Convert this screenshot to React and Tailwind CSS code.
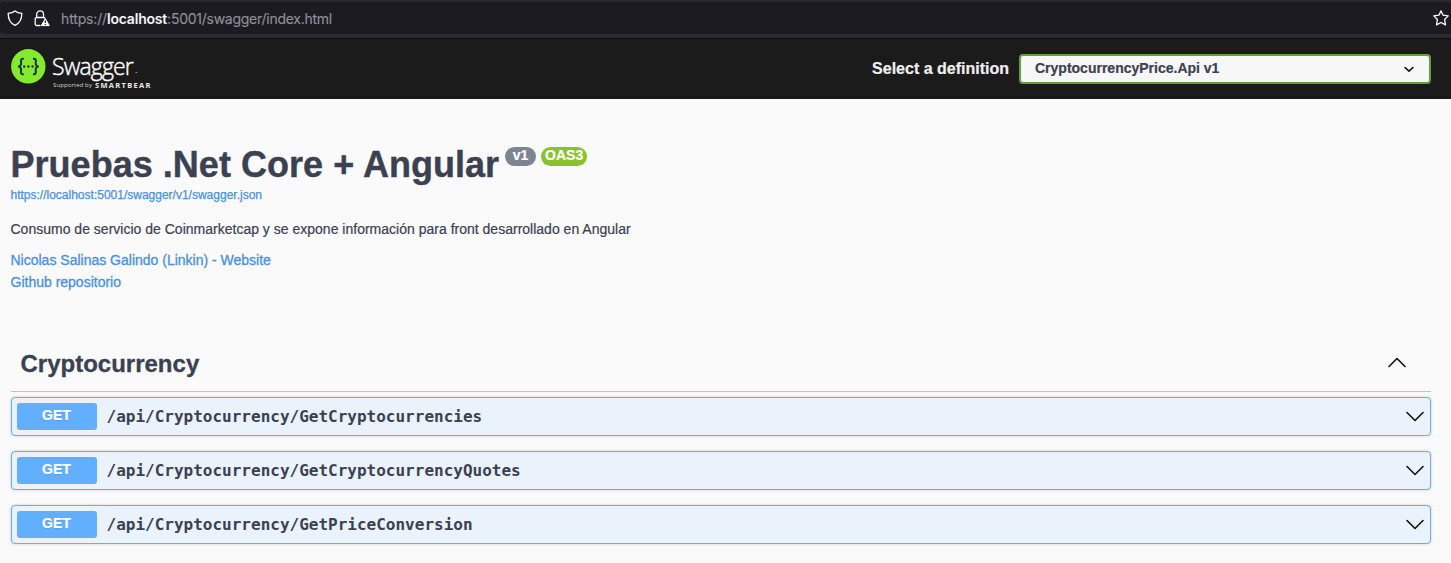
const ENDPOINTS = [
  "/api/Cryptocurrency/GetCryptocurrencies",
  "/api/Cryptocurrency/GetCryptocurrencyQuotes",
  "/api/Cryptocurrency/GetPriceConversion",
];

function ShieldIcon() {
  return (
    <svg className="h-4 w-4" viewBox="0 0 16 16" fill="none" stroke="#fbfbfe" strokeWidth="1.3" strokeLinejoin="round">
      <path d="M8 .9C6.300 2.300 3.900 3.100 1.200 3.300C1.100 8.500 2.700 12.900 8 15.400C13.300 12.900 14.900 8.500 14.800 3.300C12.100 3.100 9.700 2.300 8 .9Z" />
    </svg>
  );
}

function LockWarningIcon() {
  return (
    <svg className="h-[17px] w-4" viewBox="0 0 16 17">
      <path
        d="M6.500 15.500H2.700C1.800 15.500 1.200 14.900 1.200 14V9C1.200 8.100 1.800 7.500 2.700 7.500H9.600C10.300 7.500 10.800 7.900 11 8.500M2.700 7.500V4.300C2.700 2.300 4.200.9 6.100.9S9.500 2.300 9.500 4.300V7.500"
        fill="none"
        stroke="#fbfbfe"
        strokeWidth="1.300"
      />
      <path d="M11.300 8.600L15.300 15.600H7.300Z" fill="#fbfbfe" stroke="#fbfbfe" strokeWidth="1" strokeLinejoin="round" />
      <path d="M11.300 10.500V13M11.300 14V15" stroke="#1c1b22" strokeWidth="1.200" />
    </svg>
  );
}

function StarIcon() {
  return (
    <svg className="h-4 w-4 shrink-0" viewBox="0 0 16 16" fill="none" stroke="#fbfbfe" strokeWidth="1.300" strokeLinejoin="round">
      <path d="M8 .9L10.100 5.200L15.200 5.900L11.600 9.500L12.500 14.900L8 12.500L3.500 14.900L4.400 9.500L.8 5.900L5.900 5.200Z" />
    </svg>
  );
}

function AddressBar() {
  return (
    <div className="h-[39px] border-b border-[#0c0c0d] bg-[#2b2a33] pt-0.5">
      <div className="flex h-8 items-center rounded-l-sm bg-[#1c1b22] pl-[7px]">
        <ShieldIcon />
        <div className="ml-[11px]"><LockWarningIcon /></div>
        <div className="ml-[11px] pt-0.5 font-['Inter',sans-serif] text-[14px] leading-5 tracking-[-0.26px] whitespace-nowrap text-[#8f8f96] [-webkit-text-stroke:0.15px_#8f8f96]">
          <span className="tracking-[-0.15px]">https://</span><span className="font-semibold tracking-[-0.2px] text-[#fbfbfe]">localhost</span>:5001/swagger/index.html
        </div>
        <div className="mr-[2px] ml-auto"><StarIcon /></div>
      </div>
    </div>
  );
}

function SwaggerLogo() {
  return (
    <div className="flex h-[40px] items-start">
      <svg className="h-9 w-[35px] shrink-0" viewBox="0 0 35 36">
        <circle cx="17.300" cy="17.300" r="17.200" fill="#85ea2d" />
        <g fill="none" stroke="#173647" strokeWidth="2">
          <path d="M12.800 9.800H11.900C10.400 9.800 9.900 10.700 10 12.200L10.100 14.500C10.100 16.400 9.300 17.300 7.200 17.500C9.300 17.700 10.100 18.600 10.100 20.500L10 22.800C9.900 24.300 10.400 25.200 11.900 25.200H12.800" />
          <path d="M22 9.800H22.900C24.400 9.800 24.900 10.700 24.800 12.200L24.700 14.500C24.700 16.400 25.500 17.300 27.600 17.500C25.500 17.700 24.700 18.600 24.700 20.500L24.800 22.800C24.900 24.300 24.400 25.200 22.900 25.200H22" />
        </g>
        <g fill="#173647">
          <circle cx="13.200" cy="17.500" r="1.200" />
          <circle cx="17.400" cy="17.500" r="1.200" />
          <circle cx="21.600" cy="17.500" r="1.200" />
        </g>
      </svg>
      <div className="ml-[6px] pt-[2px] text-white">
        <div className="flex h-[29px] items-end font-['Open_Sans',sans-serif]">
          <span className="text-[23px] leading-[28px] font-light tracking-[-0.85px] [-webkit-text-stroke:0.4px_#fff]">Swagger</span>
          <span className="ml-0.5 pb-[5px] text-[3px] leading-none">™</span>
        </div>
        <div className="flex h-2.5 items-center pl-px whitespace-nowrap">
          <span className="font-['Open_Sans',sans-serif] text-[6px] leading-[10px] tracking-[0.1px] text-[#d5d5d5]">Supported by</span>
          <span className="ml-[3px] font-['Open_Sans',sans-serif] text-[7.500px] leading-[10px] font-bold tracking-[1.3px] text-[#e8e8e8]">SMARTBEAR</span>
        </div>
      </div>
    </div>
  );
}

function Chevron({ up = false }) {
  return (
    <svg className="h-3 w-5 shrink-0" viewBox="0 0 20 12" fill="none" stroke="#111" strokeWidth="1.600" strokeLinecap="round" strokeLinejoin="round">
      <path d={up ? "M2 9.500L10 1.500L18 9.500" : "M2 1.500L10 9.500L18 1.500"} />
    </svg>
  );
}

function TopBar() {
  return (
    <header className="flex h-[60px] items-center justify-between bg-[#1b1b1b] pr-5 pl-[11px]">
      <SwaggerLogo />
      <div className="flex items-center">
        <span className="text-base leading-6 font-bold whitespace-nowrap text-[#f0f0f0] [-webkit-text-stroke:0.2px_#f0f0f0]">Select a definition</span>
        <div className="ml-2.5 flex h-[30px] w-[412px] items-center justify-between rounded-[4px] border-2 border-[#62a03f] bg-[#f7f7f7] pr-[14px] pl-3.5">
          <span className="-mt-0.5 text-sm leading-5 font-bold text-[#3b4151] [-webkit-text-stroke:0.2px_#3b4151]">CryptocurrencyPrice.Api v1</span>
          <svg className="h-3 w-3" viewBox="0 0 12 12" fill="none" stroke="#111" strokeWidth="1.600" strokeLinecap="round" strokeLinejoin="round">
            <path d="M2 4.500L6 8.200L10 4.500" />
          </svg>
        </div>
      </div>
    </header>
  );
}

function Info() {
  return (
    <section className="-ml-[0.5px] pt-[45px] whitespace-nowrap text-[#3b4151]">
      <div className="flex h-[42px] items-start">
        <h1 className="text-[36px] leading-[42px] font-bold tracking-[0.03px] [-webkit-text-stroke:0.4px_#3b4151]">Pruebas .Net Core + Angular</h1>
        <span className="mt-[3px] ml-[6px] flex h-[19px] w-[31px] justify-center rounded-full bg-[#7d8492] text-sm leading-[17px] font-bold text-white [-webkit-text-stroke:0.2px_#fff]">v1</span>
        <span className="mt-[3px] ml-[5px] flex h-[19px] w-[46px] justify-center rounded-full bg-[#89c22a] text-sm leading-[17px] font-bold text-white [-webkit-text-stroke:0.2px_#fff]">OAS3</span>
      </div>
      <a className="block h-[18px] text-xs leading-[18px] text-[#4990e2] [-webkit-text-stroke:0.25px_#4990e2]">https://localhost:5001/swagger/v1/swagger.json</a>
      <p className="mt-[15px] text-sm leading-5 tracking-[0.007px] [-webkit-text-stroke:0.2px_#3b4151]">
        Consumo de servicio de Coinmarketcap y se expone información para front desarrollado en Angular
      </p>
      <div className="mt-[10px] text-sm leading-[22px] text-[#4990e2] [-webkit-text-stroke:0.3px_#4990e2]">
        <a className="block">Nicolas Salinas Galindo (Linkin) - Website</a>
        <a className="block">Github repositorio</a>
      </div>
    </section>
  );
}

function Endpoint({ path }) {
  return (
    <div className="flex h-[39px] items-center rounded-[4px] border border-[#61affe] bg-[#eaf2fb] pr-[5px] pl-[5px] shadow-[0_0_3px_rgba(0,0,0,0.19)]">
      <span className="h-[27px] w-20 rounded-[3px] bg-[#61affe] pr-px text-center text-sm leading-[25px] font-bold text-white [-webkit-text-stroke:0.2px_#fff] [text-shadow:0_1px_0_rgba(0,0,0,0.1)]">GET</span>
      <span className="ml-[9.5px] flex-1 font-['DejaVu_Sans_Mono',monospace] text-base leading-5 font-bold text-[#3b4151]">{path}</span>
      <Chevron />
    </div>
  );
}

export default function App() {
  return (
    <div className="h-[563px] overflow-hidden bg-[#fafafa] font-['Liberation_Sans',sans-serif]">
      <AddressBar />
      <TopBar />
      <main className="pr-5 pl-[11px]">
        <Info />
        <section className="mt-[42px]">
          <div className="flex h-[57px] items-center justify-between border-b border-[#bfc1c5] pr-6 pl-[9.5px]">
            <h2 className="pt-0.5 text-2xl leading-7 font-bold text-[#3b4151] [-webkit-text-stroke:0.3px_#3b4151]">Cryptocurrency</h2>
            <Chevron up />
          </div>
          <div className="mt-[5px] flex flex-col gap-[15px]">
            {ENDPOINTS.map((path) => (
              <Endpoint key={path} path={path} />
            ))}
          </div>
        </section>
      </main>
    </div>
  );
}
